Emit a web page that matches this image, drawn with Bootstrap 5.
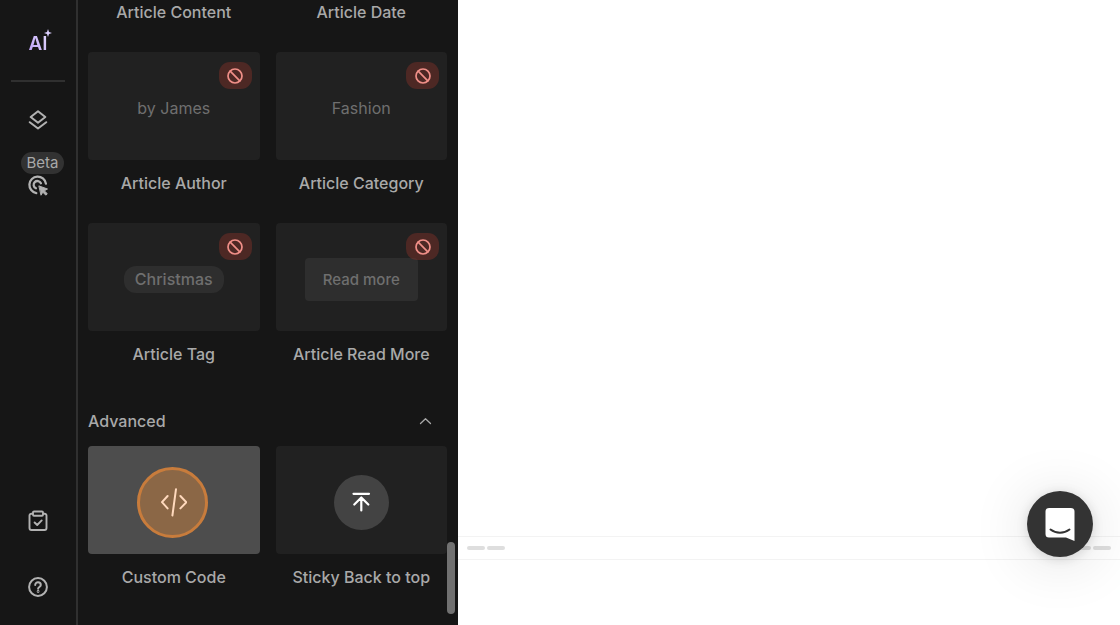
<!DOCTYPE html>
<html lang="en" data-bs-theme="dark">
<head>
<meta charset="utf-8">
<meta name="viewport" content="width=device-width, initial-scale=1">
<title>Page builder</title>
<link href="https://cdn.jsdelivr.net/npm/bootstrap@5.3.0/dist/css/bootstrap.min.css" rel="stylesheet">
<style>
  body { font-family: Inter, "Liberation Sans", sans-serif; font-size: 16px; line-height: 24px; background: #fff; color: #a9a9a9; }
  svg { display: block; fill: none; stroke: currentColor; stroke-linecap: round; stroke-linejoin: round; }
  button { color: inherit; font: inherit; }
  .rail { width: 78px; background: #161616; border-right: 2px solid #303030; padding: 28px 0 24px; }
  .rail-btn { width: 28px; height: 28px; display: grid; place-items: center; color: #b2b2b2; }
  .rail-gap { margin-bottom: 38px; }
  .ai-logo { padding-top: 3px; }
  .ai-text { display: block; font-size: 19px; font-weight: 600; line-height: 25px; background: linear-gradient(60deg, #b79af5, #e6ddff); -webkit-background-clip: text; background-clip: text; color: transparent; }
  .ai-spark { top: 0; right: -5px; }
  .rail-rule { width: 54px; height: 2px; background: #303030; margin: 24px 0; }
  .beta-pill { margin: 18px 0 0 9px; padding: 0 6px; height: 22px; line-height: 22px; border-radius: 11px; background: #323232; color: #a9a9a9; font-size: 15px; }
  .widgets { width: 380px; background: #161616; padding: 0 11px 36px 10px; font-weight: 500; }
  .widget-grid { display: grid; grid-template-columns: 1fr 1fr; column-gap: 16px; row-gap: 28px; }
  .tile { height: 108px; border-radius: 4px; background: #212121; margin-bottom: 11px; }
  .tile.hovered { background: #4d4d4d; }
  .sample { color: #6f6f6f; font-weight: 400; margin-top: 4px; }
  .tag-pill { background: #2e2e2e; border-radius: 12px; padding: 2px 11px; line-height: 23px; font-weight: 500; }
  .more-box { background: #2e2e2e; border-radius: 4px; padding: 10px 18px; line-height: 23px; font-size: 15px; font-weight: 500; }
  .blocked { top: 10px; right: 8px; width: 33px; height: 27px; border-radius: 11px; background: rgba(130,48,40,.45); color: #f08f88; display: grid; place-items: center; }
  .group-head { margin: 43px 0 13px; padding-right: 15px; }
  .round { border-radius: 50%; display: grid; place-items: center; }
  .click-ring { width: 71px; height: 71px; border: 3px solid #c87c3c; background: #8b6746; color: #ffd9bd; margin-top: 4px; margin-right: 2px; }
  .top-disc { width: 55px; height: 55px; background: #434343; color: #fff; margin-top: 4px; }
  .thumb { width: 8px; height: 72px; right: 3px; bottom: 11px; border-radius: 4px; background: #717171; }
  .page-foot { height: 24px; border: solid #f3f3f3; border-width: 1px 0; padding: 0 9px; margin-bottom: 65px; gap: 2px; }
  .dash { width: 18px; height: 4px; border-radius: 2px; background: #dedede; }
  .chat { width: 66px; height: 66px; right: 27px; bottom: 68px; background: #333; color: #fff; box-shadow: 0 5px 60px rgba(0,0,0,.14), 0 2px 12px rgba(0,0,0,.14); }
</style>
</head>
<body>
<div class="d-flex vh-100 overflow-hidden">
  <nav class="rail d-flex flex-column align-items-center flex-shrink-0" aria-label="Tools">
    <button class="rail-btn btn border-0 p-0">
      <span class="ai-logo d-block position-relative"><span class="ai-text">AI</span>
        <svg class="ai-spark position-absolute" width="10" height="10" viewBox="0 0 10 10"><path stroke="none" fill="#dccfff" d="m5 1 1 3 3 1-3 1-1 3-1-3-3-1 3-1z"/></svg>
      </span>
    </button>
    <div class="rail-rule"></div>
    <button class="rail-btn btn border-0 p-0" aria-label="Sections">
      <svg width="20" height="20" viewBox="0 0 20 20" stroke-width="2"><path d="M10 1.200 17.300 7 10 12.800 2.700 7zM1.800 12.200l8.200 6.300 8.200-6.300"/></svg>
    </button>
    <span class="beta-pill">Beta</span>
    <button class="rail-btn btn border-0 p-0 align-items-start" aria-label="Interactions">
      <svg width="22" height="22" viewBox="0 0 22 22" stroke-width="2.300"><path d="M9.300 19.100A8.300 8.300 0 1 1 18.900 9.600M8.900 14.300a3.800 3.800 0 1 1 5-5"/><path fill="currentColor" stroke-width="1" d="m12.200 12 8.300 3-3.200 1.800 3 2.900-1.500 1.500-3-3-1.600 2.700z"/></svg>
    </button>
    <button class="rail-btn rail-gap btn border-0 p-0 mt-auto" aria-label="Checklist">
      <svg width="20" height="22" viewBox="0 0 20 22" stroke-width="1.900"><path d="M5 3.700H3.400a1.900 1.900 0 0 0-1.900 1.900v12.500A1.900 1.900 0 0 0 3.400 20h13.200a1.900 1.900 0 0 0 1.900-1.900V5.600a1.900 1.900 0 0 0-1.900-1.900H15M6 1.500h8a1 1 0 0 1 1 1v2.300a1 1 0 0 1-1 1H6a1 1 0 0 1-1-1V2.500a1 1 0 0 1 1-1zM6.600 12.500l2.600 2.500 4.500-4.600"/></svg>
    </button>
    <button class="rail-btn btn border-0 p-0" aria-label="Help">
      <svg width="20" height="20" viewBox="0 0 20 20" stroke-width="2"><circle cx="10" cy="10" r="8.900"/><path d="M7.200 7.900c0-3.500 5.600-3.300 5.600.1 0 2-2.700 2-2.700 3.700"/><circle cx="10.100" cy="14.500" r=".4"/></svg>
    </button>
  </nav>

  <aside class="widgets position-relative flex-shrink-0 overflow-hidden">
    <div class="widget-grid text-center">
      <div>Article Content</div>
      <div>Article Date</div>
      <button class="border-0 bg-transparent p-0">
        <span class="tile position-relative d-flex align-items-center justify-content-center">
          <span class="sample">by James</span>
          <span class="blocked position-absolute"><svg width="16" height="16" viewBox="0 0 16 16" stroke-width="1.700"><circle cx="8" cy="8" r="7"/><path d="m3.200 3.200 9.600 9.600"/></svg></span>
        </span>Article Author
      </button>
      <button class="border-0 bg-transparent p-0">
        <span class="tile position-relative d-flex align-items-center justify-content-center">
          <span class="sample">Fashion</span>
          <span class="blocked position-absolute"><svg width="16" height="16" viewBox="0 0 16 16" stroke-width="1.700"><circle cx="8" cy="8" r="7"/><path d="m3.200 3.200 9.600 9.600"/></svg></span>
        </span>Article Category
      </button>
      <button class="border-0 bg-transparent p-0">
        <span class="tile position-relative d-flex align-items-center justify-content-center">
          <span class="sample tag-pill">Christmas</span>
          <span class="blocked position-absolute"><svg width="16" height="16" viewBox="0 0 16 16" stroke-width="1.700"><circle cx="8" cy="8" r="7"/><path d="m3.200 3.200 9.600 9.600"/></svg></span>
        </span>Article Tag
      </button>
      <button class="border-0 bg-transparent p-0">
        <span class="tile position-relative d-flex align-items-center justify-content-center">
          <span class="sample more-box">Read more</span>
          <span class="blocked position-absolute"><svg width="16" height="16" viewBox="0 0 16 16" stroke-width="1.700"><circle cx="8" cy="8" r="7"/><path d="m3.200 3.200 9.600 9.600"/></svg></span>
        </span>Article Read More
      </button>
    </div>
    <div class="group-head d-flex justify-content-between align-items-center">
      <span>Advanced</span>
      <button class="border-0 bg-transparent p-0" aria-label="Collapse Advanced">
        <svg width="14" height="8" viewBox="0 0 14 8" stroke-width="1.300"><path d="M2.500 6.500 7.500 1.800l5 4.700"/></svg>
      </button>
    </div>
    <div class="widget-grid text-center">
      <button class="border-0 bg-transparent p-0">
        <span class="tile hovered d-flex align-items-center justify-content-center">
          <span class="click-ring round"><svg width="28" height="30" viewBox="0 0 28 30" stroke-width="2"><path d="M8.600 9 3 15.200l5.600 6.200M21.400 9l6 6.200-6 6.200M17 2.200 13.400 28.500"/></svg></span>
        </span>Custom Code
      </button>
      <button class="border-0 bg-transparent p-0">
        <span class="tile d-flex align-items-center justify-content-center">
          <span class="top-disc round"><svg width="20" height="20" viewBox="0 0 20 20" stroke-width="2.200"><path d="M2.500 1.800h15.500M10.300 18.500V5.500M3.300 12.500l7-7 7 7"/></svg></span>
        </span>Sticky Back to top
      </button>
    </div>
    <div class="thumb position-absolute"></div>
  </aside>

  <main class="flex-grow-1 d-flex flex-column justify-content-end bg-white position-relative" data-bs-theme="light">
    <div class="page-foot d-flex align-items-center">
      <span class="dash"></span><span class="dash"></span>
      <span class="dash ms-auto"></span><span class="dash"></span>
    </div>
    <button class="chat round border-0 p-0 position-absolute" aria-label="Open chat">
      <svg width="30" height="34" viewBox="0 0 30 34"><path fill="currentColor" stroke="none" d="M4 1h22a3.500 3.500 0 0 1 3.500 3.500V34l-8.500-3.500H4A3.500 3.500 0 0 1 .5 27V4.500A3.500 3.500 0 0 1 4 1z"/><path stroke="#333" stroke-width="2" d="M5.500 22.500c5.500 4.200 13.500 4.200 19 0"/></svg>
    </button>
  </main>
</div>
<script src="https://cdn.jsdelivr.net/npm/bootstrap@5.3.0/dist/js/bootstrap.bundle.min.js"></script>
</body>
</html>
